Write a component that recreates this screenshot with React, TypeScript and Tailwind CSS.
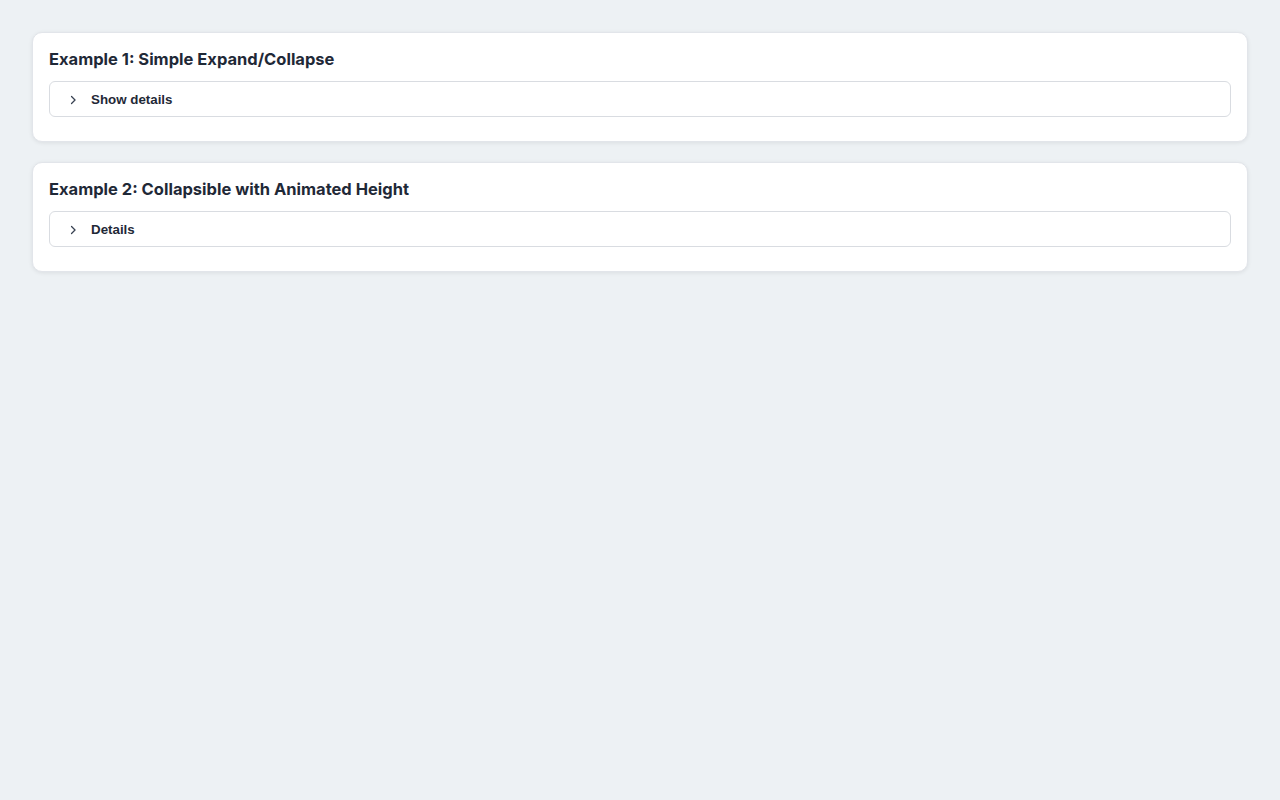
import React from "react";

function Chevron() {
  return (
    <svg width="14" height="14" viewBox="0 0 24 24" fill="none" stroke="#374151" strokeWidth="2.2" strokeLinecap="round" strokeLinejoin="round" className="mt-[2px]">
      <path d="M9.5 6l6 6-6 6" />
    </svg>
  );
}

function Card({ title, label }: { title: string; label: string }) {
  return (
    <div className="bg-white rounded-[10px] border border-[#e2e5ea] shadow-[0_1px_4px_rgba(0,0,0,0.08)] p-4">
      <h2 className="text-[16.5px] leading-5 font-bold text-[#1f2937] mb-3" style={{ fontFamily: "Inter, sans-serif" }}>{title}</h2>
      <div className="border border-[#d9dce1] rounded-md mb-2">
        <button className="flex items-center h-[34px] w-full pl-[16px] gap-[11px] text-left" style={{ fontFamily: "'Liberation Sans', Arial, sans-serif" }}>
          <Chevron />
          <span className="text-[13.333px] font-bold text-[#1f2937] mt-[1px]">{label}</span>
        </button>
      </div>
    </div>
  );
}

export default function App() {
  return (
    <div className="min-h-[800px] bg-[#edf1f4] p-8 flex flex-col gap-5">
      <Card title="Example 1: Simple Expand/Collapse" label="Show details" />
      <Card title="Example 2: Collapsible with Animated Height" label="Details" />
    </div>
  );
}
